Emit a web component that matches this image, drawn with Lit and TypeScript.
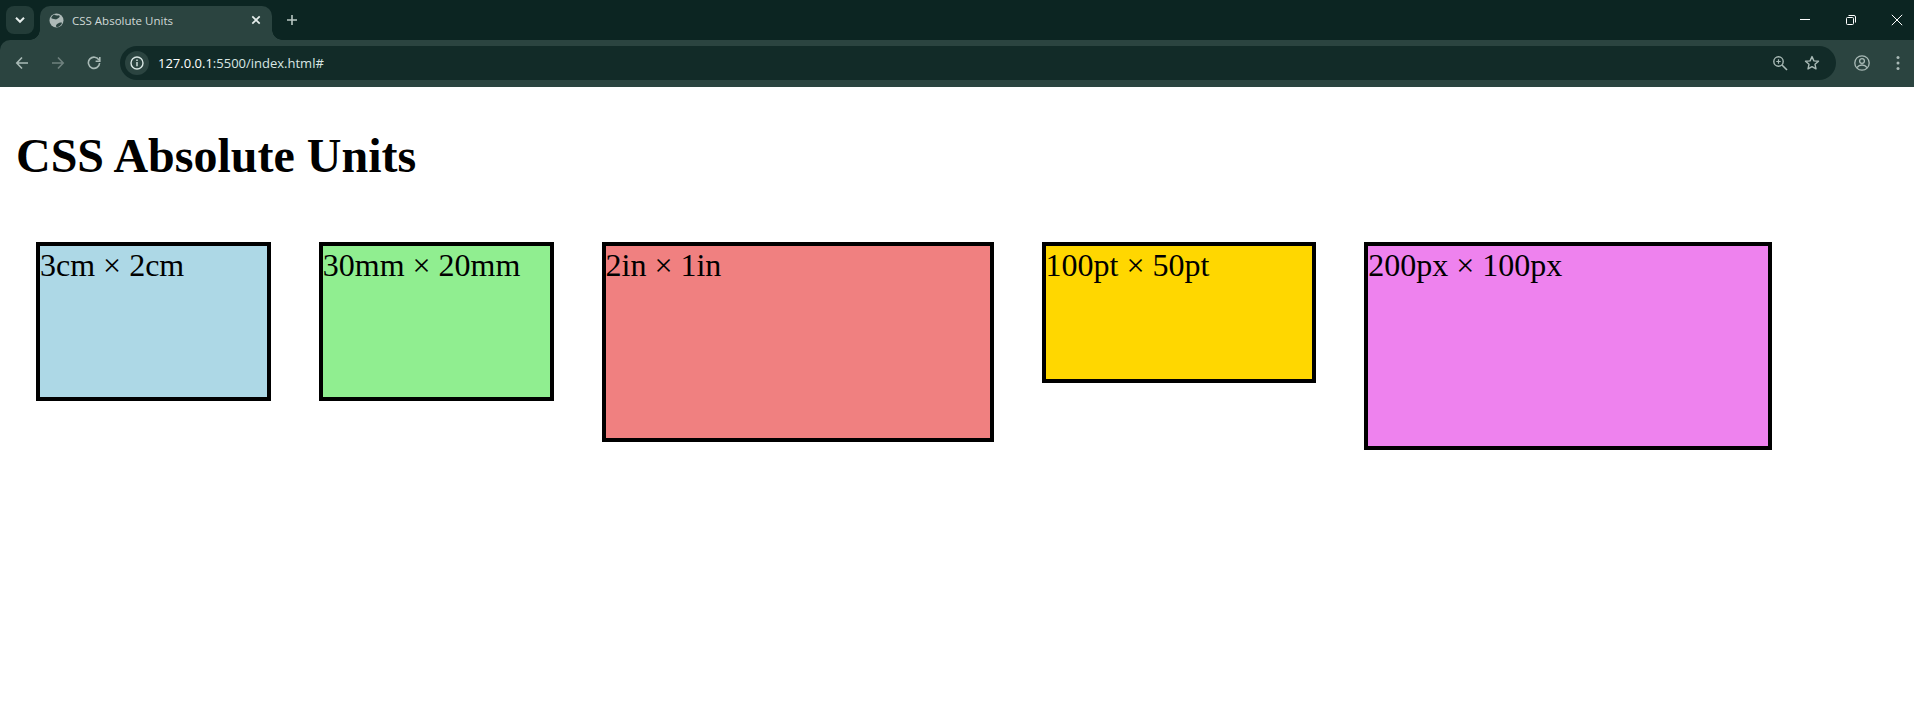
import { LitElement, html, css, svg } from "lit";
import { customElement } from "lit/decorators.js";

const boxes = [
  { label: "3cm × 2cm", w: 226.77, h: 151.18, color: "#add8e6" },
  { label: "30mm × 20mm", w: 226.77, h: 151.18, color: "#90ee90" },
  { label: "2in × 1in", w: 384, h: 192, color: "#f08080" },
  { label: "100pt × 50pt", w: 266.67, h: 133.33, color: "#ffd700" },
  { label: "200px × 100px", w: 400, h: 200, color: "#ee82ee" },
];

const icon = (w: number, h: number, content: unknown) => html`<svg width=${w} height=${h} viewBox="0 0 ${w} ${h}" fill="none">${content}</svg>`;

@customElement("app-root")
export class AppRoot extends LitElement {
  static styles = css`
    :host { display: block; background: #fff; min-height: 703px; font-family: "Liberation Serif", serif; color: #000; }
    .chrome { background: #0c2522; }
    .titlebar { height: 40px; display: flex; align-items: flex-start; box-sizing: border-box; padding-top: 6px; padding-left: 6px; }
    .search { width: 28px; height: 28px; border-radius: 8px; background: #233c38; display: flex; align-items: center; justify-content: center; flex: none; }
    .tab { margin-left: 6px; width: 232px; height: 34px; box-sizing: border-box; background: #2b4440; border-radius: 10px 10px 0 0; display: flex; align-items: center; padding: 0 8px 6px 9px; gap: 8px; position: relative; flex: none; color: #d0d9d7; font: 11.5px "Open Sans", sans-serif; }
    .tab::before, .tab::after { content: ""; position: absolute; bottom: 0; width: 10px; height: 10px; }
    .tab::before { left: -10px; background: radial-gradient(circle at 0 0, transparent 9.5px, #2b4440 10px); }
    .tab::after { right: -10px; background: radial-gradient(circle at 100% 0, transparent 9.5px, #2b4440 10px); }
    .tab-title { flex: 1; white-space: nowrap; }
    .plus { margin-left: 13px; margin-top: 7px; display: flex; }
    .spacer { flex: 1; }
    .win { width: 46px; height: 40px; display: flex; align-items: center; justify-content: center; margin-top: -6px; flex: none; }
    .win.last { width: 34px; margin-left: 6px; }
    .toolbar { height: 47px; background: #2b4440; box-sizing: border-box; display: flex; align-items: center; padding: 0 0 1px 4px; border-top-left-radius: 10px; }
    .nav { width: 36px; height: 30px; display: flex; align-items: center; justify-content: center; flex: none; }
    .omnibox { margin-left: 8px; flex: 1; height: 34px; border-radius: 17px; background: #122b28; display: flex; align-items: center; padding: 0 8px 0 5px; color: #d8e6e3; font: 13px "Open Sans", sans-serif; }
    .info { width: 24px; height: 24px; border-radius: 50%; background: #2b4440; display: flex; align-items: center; justify-content: center; flex: none; margin-right: 9px; }
    .url { flex: 1; white-space: nowrap; }
    .url b { font-weight: 400; color: #fff; }
    .action { width: 32px; height: 30px; display: flex; align-items: center; justify-content: center; flex: none; }
    .profile { margin-left: 10px; }
    .menu { margin-left: 4px; }
    .page { padding: 0 16px; }
    h1 { font-size: 48px; font-weight: 700; margin: 41px 0 39px; line-height: normal; }
    .row { display: flex; align-items: flex-start; gap: 48px; padding: 20px; }
    .box { border: 4px solid #000; font-size: 32px; flex: none; box-sizing: border-box; white-space: nowrap; padding-top: 1px; }
  `;

  render() {
    const stroke = "#a9bab6";
    return html`
      <div class="chrome">
        <div class="titlebar">
          <div class="search">${icon(12, 8, svg`<path d="M2 1.800 6 5.800l4-4" stroke="#e6eeec" stroke-width="2"/>`)}</div>
          <div class="tab">
            ${icon(15, 15, svg`<circle cx="7.500" cy="7.500" r="7" fill="#aebab8"/><path d="M5 1.500c1.500 1 3 1.200 5 .8 1 .8 1 2-.5 2.700-1.500.7-1.800 1.800-3.500 1.300C4.700 5.800 3 6 2.200 5 2.800 3.500 3.600 2.300 5 1.500zM7 13.800c-.3-2 .8-2.500 2-3.300 1.200-.7 2.500-1.300 4-.7-.5 2-2 3.500-4 4.200z" fill="#2b4440"/>`)}
            <span class="tab-title">CSS Absolute Units</span>
            ${icon(16, 16, svg`<path d="M4.300 4.300l7.400 7.400M11.700 4.300l-7.400 7.400" stroke="#e6eeec" stroke-width="1.700"/>`)}
          </div>
          <div class="plus">${icon(14, 14, svg`<path d="M7 2v10M2 7h10" stroke="#b9c7c4" stroke-width="1.600"/>`)}</div>
          <div class="spacer"></div>
          <div class="win">${icon(12, 12, svg`<path d="M1 5.500h10" stroke="#fff"/>`)}</div>
          <div class="win">${icon(12, 12, svg`<rect x="1.500" y="3.500" width="7" height="7" rx="1" stroke="#fff"/><path d="M3.500 1.500h5.500a1.500 1.500 0 0 1 1.500 1.500v5.500" stroke="#fff"/>`)}</div>
          <div class="win last">${icon(12, 12, svg`<path d="M.8.800l10.400 10.400M11.200.800.800 11.200" stroke="#fff"/>`)}</div>
        </div>
        <div class="toolbar">
          <div class="nav">${icon(14, 14, svg`<path d="M13 7H2M7 1.500 1.800 7 7 12.500" stroke=${stroke} stroke-width="1.600"/>`)}</div>
          <div class="nav">${icon(14, 14, svg`<path d="M1 7h11M7 1.500 12.200 7 7 12.500" stroke="#6f817e" stroke-width="1.600"/>`)}</div>
          <div class="nav">${icon(14, 14, svg`<path d="M12 4.200A5.600 5.600 0 1 0 12.600 7" stroke=${stroke} stroke-width="1.600"/><path d="M12.800 1v4.200H8.600" stroke=${stroke} stroke-width="1.600"/>`)}</div>
          <div class="omnibox">
            <div class="info">${icon(14, 14, svg`<circle cx="7" cy="7" r="6" stroke="#d8e6e3" stroke-width="1.400"/><path d="M7 6v4.200M7 3.600v1.400" stroke="#d8e6e3" stroke-width="1.400"/>`)}</div>
            <span class="url"><b>127.0.0.1</b>:5500/index.html#</span>
            <div class="action">${icon(16, 16, svg`<circle cx="6.500" cy="6.500" r="4.700" stroke=${stroke} stroke-width="1.400"/><path d="M10 10l5 5" stroke=${stroke} stroke-width="1.600"/><path d="M4.300 6.500h4.400M6.500 4.300v4.400" stroke=${stroke} stroke-width="1.200"/>`)}</div>
            <div class="action">${icon(16, 16, svg`<path d="M8 1.600l1.900 4.300 4.600.4-3.500 3 1 4.600L8 11.600l-4 2.300 1-4.600-3.500-3 4.600-.4z" stroke=${stroke} stroke-width="1.400" stroke-linejoin="round"/>`)}</div>
          </div>
          <div class="action profile">${icon(16, 16, svg`<circle cx="8" cy="8" r="7.200" stroke=${stroke} stroke-width="1.300"/><circle cx="8" cy="6" r="2.400" stroke=${stroke} stroke-width="1.300"/><path d="M3 12.500c1.500-2 3-2.500 5-2.500s3.500.5 5 2.500" stroke=${stroke} stroke-width="1.300"/>`)}</div>
          <div class="action menu">${icon(16, 16, svg`<circle cx="8" cy="2.500" r="1.500" fill=${stroke}/><circle cx="8" cy="8" r="1.500" fill=${stroke}/><circle cx="8" cy="13.500" r="1.500" fill=${stroke}/>`)}</div>
        </div>
      </div>
      <div class="page">
        <h1>CSS Absolute Units</h1>
        <div class="row">
          ${boxes.map((b) => html`<div class="box" style="width:${b.w + 8}px;height:${b.h + 8}px;background:${b.color}">${b.label}</div>`)}
        </div>
      </div>
    `;
  }
}
